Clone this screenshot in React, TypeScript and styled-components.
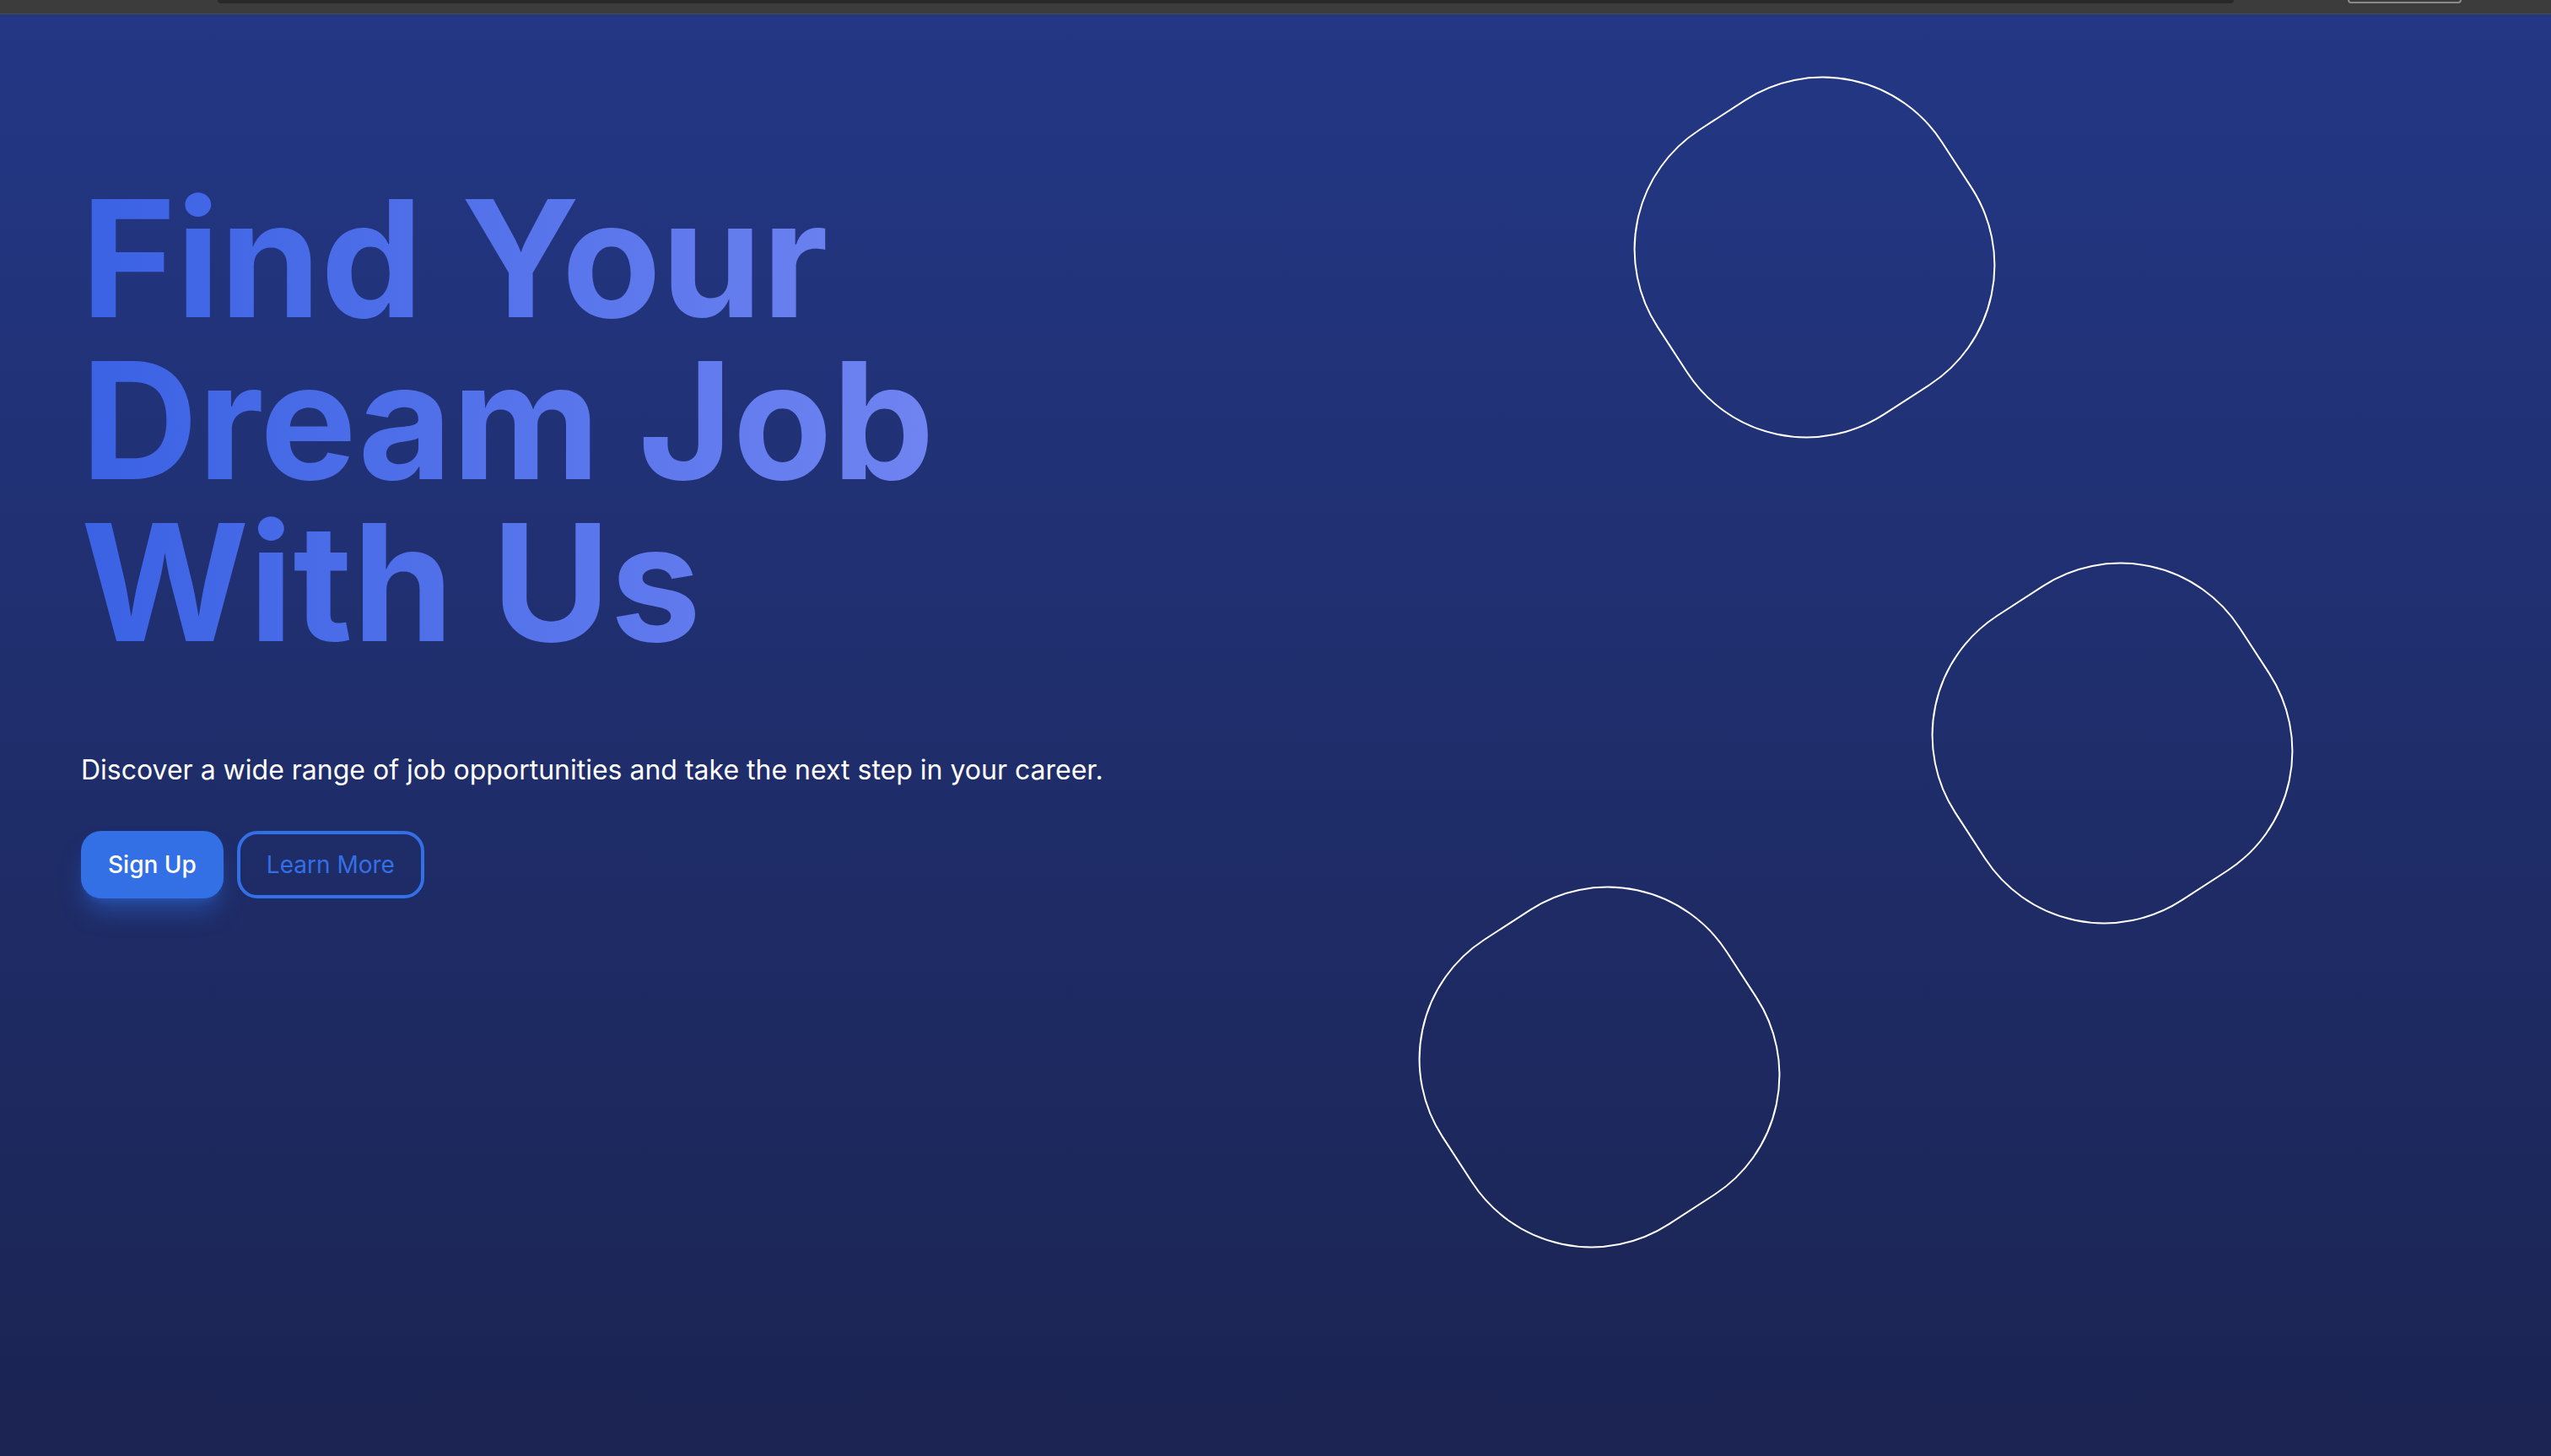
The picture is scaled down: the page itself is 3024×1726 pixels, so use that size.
import React from 'react';
import styled, { createGlobalStyle } from 'styled-components';

const GlobalStyle = createGlobalStyle`
    html, body {
        margin: 0;
        padding: 0;
    }
    body {
        background: #1b2452;
        font-family: Inter, "Noto Sans", sans-serif;
    }
`;

const Page = styled.div`
    min-height: 1726px;
    display: flex;
    flex-direction: column;
`;

const BrowserStrip = styled.div`
    height: 16px;
    display: flex;
    align-items: flex-start;
    padding-left: 258px;
    padding-right: 106px;
    background: #3c3c3c;
    border-bottom: 1px solid #4a4a4a;
`;

const AddressBar = styled.div`
    width: 2390px;
    height: 4px;
    background: #282828;
    border-radius: 0 0 12px 12px;
`;

const StripButton = styled.div`
    margin-left: auto;
    width: 131px;
    height: 2px;
    border: 2px solid #8a8a8a;
    border-top: none;
    border-radius: 0 0 14px 14px;
`;

const Hero = styled.section`
    flex: 1;
    position: relative;
    overflow: hidden;
    padding: 193px 96px 0;
    background: linear-gradient(180deg, #233785 0%, #1b2452 100%);
`;

const Title = styled.h1`
    margin: 0;
    width: fit-content;
    font-size: 192px;
    line-height: 1;
    font-weight: 700;
    background: linear-gradient(90deg, #3a62e4 0%, #7084f1 100%);
    -webkit-background-clip: text;
    background-clip: text;
    color: transparent;
`;

const Lead = styled.p`
    margin: 103px 0 0;
    font-size: 32px;
    line-height: 48px;
    color: #ffffff;
`;

const Actions = styled.div`
    display: flex;
    gap: 16px;
    margin-top: 48px;
`;

const Button = styled.button<{ $variant: 'solid' | 'outline' }>`
    font-family: inherit;
    font-size: 28px;
    line-height: 48px;
    font-weight: 500;
    border-radius: 24px;
    cursor: pointer;
    ${({ $variant }) =>
        $variant === 'solid'
            ? `
        padding: 16px 32px;
        border: none;
        background: #3370e6;
        color: #ffffff;
        box-shadow: 0 20px 30px -6px rgba(51, 112, 230, 0.45), 0 8px 12px -8px rgba(51, 112, 230, 0.45);
    `
            : `
        padding: 12px 31px;
        border: 4px solid #3370e6;
        background: transparent;
        color: #3370e6;
        font-weight: 400;
    `}
`;

const Blob = styled.div<{ $top: number; $left: number }>`
    position: absolute;
    top: ${({ $top }) => $top}px;
    left: ${({ $left }) => $left}px;
    width: 404px;
    height: 404px;
    box-sizing: border-box;
    border: 2px solid #ffffff;
    border-radius: 42%;
    transform: rotate(-33deg);
`;

const blobs = [
    { top: 86, left: 1949 },
    { top: 662, left: 2302 },
    { top: 1046, left: 1694 },
];

const App: React.FC = () => {
    return (
        <>
            <GlobalStyle />
            <Page>
                <BrowserStrip>
                    <AddressBar />
                    <StripButton />
                </BrowserStrip>
                <Hero>
                    {blobs.map((b, i) => (
                        <Blob key={i} $top={b.top} $left={b.left} />
                    ))}
                    <Title>
                        Find Your
                        <br />
                        Dream Job
                        <br />
                        With Us
                    </Title>
                    <Lead>Discover a wide range of job opportunities and take the next step in your career.</Lead>
                    <Actions>
                        <Button $variant="solid">Sign Up</Button>
                        <Button $variant="outline">Learn More</Button>
                    </Actions>
                </Hero>
            </Page>
        </>
    );
};

export default App;
